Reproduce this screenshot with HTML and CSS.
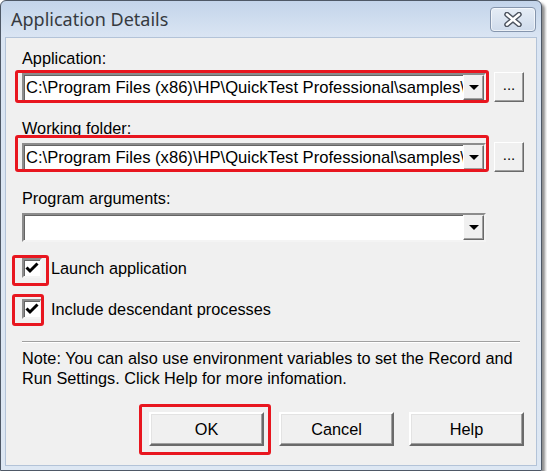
FILE: index.html
```html
<!DOCTYPE html>
<html lang="en">
<head>
    <meta charset="UTF-8">
    <title>Application Details</title>
    <link rel="stylesheet" href="styles.css">
</head>
<body>
<div class="window">
    <div class="titlebar">
        <span class="title">Application Details</span>
        <span class="close">
            <svg width="20" height="15" viewBox="0 0 20 15">
                <path d="M4 2.5 L16 12.5 M16 2.5 L4 12.5" stroke="#4d5460" stroke-width="5.5" stroke-linecap="round"/>
                <path d="M4 2.5 L16 12.5 M16 2.5 L4 12.5" stroke="#fff" stroke-width="2.6" stroke-linecap="round"/>
            </svg>
        </span>
    </div>

    <div class="client">
        <div class="field">
            <div class="label">Application:</div>
            <div class="row">
                <div class="combo mark mark-app">
                    <span class="combo-text">C:\Program Files (x86)\HP\QuickTest Professional\samples\</span>
                    <span class="drop"><i class="arrow"></i></span>
                </div>
                <span class="browse">...</span>
            </div>
        </div>

        <div class="field">
            <div class="label">Working folder:</div>
            <div class="row">
                <div class="combo mark mark-dir">
                    <span class="combo-text">C:\Program Files (x86)\HP\QuickTest Professional\samples\</span>
                    <span class="drop"><i class="arrow"></i></span>
                </div>
                <span class="browse">...</span>
            </div>
        </div>

        <div class="field">
            <div class="label">Program arguments:</div>
            <div class="row">
                <div class="combo">
                    <span class="combo-text"></span>
                    <span class="drop"><i class="arrow"></i></span>
                </div>
            </div>
        </div>

        <div class="check-row first">
            <span class="checkbox mark mark-chk1">
                <svg width="16" height="16" viewBox="0 0 16 16"><path d="M2.5 7.5 L6 11 L13.5 3.5" fill="none" stroke="#000" stroke-width="3"/></svg>
            </span>
            <span>Launch application</span>
        </div>
        <div class="check-row second">
            <span class="checkbox mark mark-chk2">
                <svg width="16" height="16" viewBox="0 0 16 16"><path d="M2.5 7.5 L6 11 L13.5 3.5" fill="none" stroke="#000" stroke-width="3"/></svg>
            </span>
            <span>Include descendant processes</span>
        </div>

        <div class="sep"></div>

        <p class="note">Note: You can also use environment variables to set the Record and<br>Run Settings. Click Help for more infomation.</p>

        <div class="buttons">
            <span class="btn mark mark-ok">OK</span>
            <span class="btn">Cancel</span>
            <span class="btn">Help</span>
        </div>
    </div>
</div>
</body>
</html>
```

FILE: styles.css
```css
body {
    margin: 0;
    background: #fff;
    font-family: "Liberation Sans", Arial, sans-serif;
    font-size: 16.3px;
    color: #000;
}

.window {
    width: 532px;
    height: 465px;
    border: 1px solid #4e5866;
    border-radius: 6px 6px 0 0;
    padding: 0 4px 4px;
    background: linear-gradient(#c3d4ea, #dae5f3 36px, #dde7f3);
    box-shadow: 3px 3px 3px rgba(0, 0, 0, 0.45);
    display: flex;
    flex-direction: column;
}

.titlebar {
    height: 36px;
    display: flex;
    align-items: center;
    justify-content: space-between;
    padding: 0 1px 0 6px;
}

.title {
    font-family: "Noto Sans", sans-serif;
    font-size: 18px;
    color: #363a40;
}

.close {
    width: 44px;
    height: 23px;
    border: 1px solid #8595ad;
    border-radius: 4px;
    background: linear-gradient(#e6edf6, #cfdbeb);
    box-shadow: inset 0 0 0 1px rgba(255, 255, 255, 0.6);
    display: flex;
    align-items: center;
    justify-content: center;
}

.client {
    flex: 1;
    background: #f0f0f0;
    border: 1px solid #b3c3d8;
    padding: 11px 12px 0 16px;
}

.label {
    height: 18px;
    line-height: 18px;
}

.row {
    display: flex;
    align-items: center;
    gap: 8px;
    height: 30px;
    margin-top: 5px;
}

.field + .field {
    margin-top: 17px;
}

.combo {
    width: 464px;
    height: 29px;
    box-sizing: border-box;
    display: flex;
    background: #fff;
    border: 2px solid;
    border-color: #8c8c8c #f4f4f4 #f4f4f4 #8c8c8c;
    box-shadow: inset 1px 1px 0 #646464;
}

.combo-text {
    flex: 1;
    min-width: 0;
    padding-left: 2px;
    font-size: 16.6px;
    line-height: 25px;
    white-space: nowrap;
    overflow: hidden;
}

.drop {
    width: 21px;
    flex-shrink: 0;
    box-sizing: border-box;
    background: #f0f0f0;
    border: 1px solid;
    border-color: #f0f0f0 #6a6a6a #6a6a6a #fff;
    box-shadow: inset -1px -1px 0 #a0a0a0;
    display: flex;
    align-items: center;
    justify-content: center;
}

.arrow {
    width: 0;
    height: 0;
    border-left: 5px solid transparent;
    border-right: 5px solid transparent;
    border-top: 5px solid #000;
    margin-top: 1px;
}

.browse {
    width: 30px;
    height: 30px;
    box-sizing: border-box;
    background: #f0f0f0;
    border: 1px solid;
    border-color: #fff #6a6a6a #6a6a6a #fff;
    box-shadow: inset -1px -1px 0 #a0a0a0;
    text-align: center;
    line-height: 24px;
    font-size: 15px;
}

.check-row {
    display: flex;
    align-items: center;
    gap: 9px;
    height: 20px;
    line-height: 18px;
}

.check-row.first {
    margin-top: 16px;
}

.check-row.second {
    margin-top: 21px;
}

.checkbox {
    width: 20px;
    height: 20px;
    box-sizing: border-box;
    background: #fff;
    border: 2px solid;
    border-color: #8c8c8c #f4f4f4 #f4f4f4 #8c8c8c;
    box-shadow: inset 1px 1px 0 #646464;
    display: flex;
    align-items: center;
    justify-content: center;
}

.sep {
    width: 498px;
    margin-top: 22px;
    border-top: 1px solid #a0a0a0;
    border-bottom: 1px solid #fff;
}

.note {
    margin: 5px 0 0;
    line-height: 20px;
}

.buttons {
    display: flex;
    justify-content: flex-end;
    gap: 15px;
    margin-top: 24px;
}

.btn {
    width: 115px;
    height: 34px;
    box-sizing: border-box;
    background: #f0f0f0;
    border: 2px solid;
    border-color: #fff #6a6a6a #6a6a6a #fff;
    box-shadow: inset -1px -1px 0 #a0a0a0, inset 1px 1px 0 #e3e3e3;
    text-align: center;
    line-height: 30px;
}

/* red annotation frames drawn over the dialog */
.mark {
    position: relative;
}

.mark::after {
    content: "";
    position: absolute;
    border: 3px solid #e8161f;
    border-radius: 3px;
    pointer-events: none;
}

.mark-app::after {
    top: -5px;
    left: -9px;
    right: -5px;
    bottom: -3px;
}

.mark-dir::after {
    top: -10px;
    left: -9px;
    right: -5px;
    bottom: -2px;
}

.mark-chk1::after {
    top: -5px;
    left: -12px;
    right: -9px;
    bottom: -10px;
}

.mark-chk2::after {
    top: -7px;
    left: -12px;
    right: -4px;
    bottom: -9px;
}

.mark-ok::after {
    top: -10px;
    left: -12px;
    right: -9px;
    bottom: -11px;
}
```
